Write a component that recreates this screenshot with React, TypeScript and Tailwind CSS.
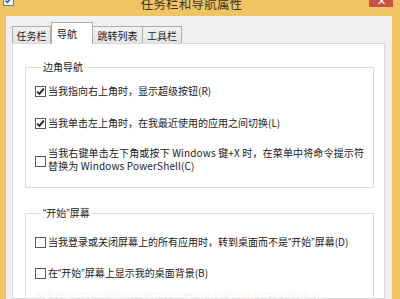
import React from "react";

const font = { fontFamily: '"Noto Sans CJK SC", "Microsoft YaHei", sans-serif' };

function Q({ c }: { c: string }) {
  return <span style={{ fontFamily: '"Liberation Sans", sans-serif' }}>{c}</span>;
}

function Box({ checked }: { checked?: boolean }) {
  return (
    <span className="w-[11px] h-[11px] shrink-0 border border-[#5a5a5a] bg-white flex items-center justify-center">
      {checked && (
        <svg width="9" height="9" viewBox="0 0 9 9">
          <path d="M1.2 4.6 L3.4 6.9 L7.8 1.6" fill="none" stroke="#1a1a1a" strokeWidth="1.7" />
        </svg>
      )}
    </span>
  );
}

function Row({ checked, children, className = "" }: { checked?: boolean; children: React.ReactNode; className?: string }) {
  return (
    <div className={`flex items-center gap-[2px] h-[14px] ${className}`}>
      <Box checked={checked} />
      <span className="whitespace-nowrap leading-[14px]">{children}</span>
    </div>
  );
}

export default function App() {
  return (
    <div
      className="w-[400px] h-[299px] bg-[#f1c463] overflow-hidden flex flex-col text-[10px] text-[#222]"
      style={font}
    >
      {/* title bar */}
      <div className="h-[16px] shrink-0 flex items-start relative">
        <div className="ml-[3px] w-[11px] h-[6px] overflow-hidden">
          <svg width="11" height="11" viewBox="0 0 11 11" className="-mt-[5px]">
            <rect x="0.5" y="0.5" width="10" height="10" fill="#eaf2fb" stroke="#5b7fa8" />
            <path d="M2.5 5.5 L4.5 7.5 L8.5 2.5" fill="none" stroke="#2a67b3" strokeWidth="1.5" />
          </svg>
        </div>
        <div className="flex-1 flex justify-center overflow-hidden h-[10px]">
          <span className="text-[12.5px] leading-[13px] -mt-[3px] text-[#3b3326] tracking-[0.2px]">任务栏和导航属性</span>
        </div>
        <div className="w-[24px] h-[7px] bg-[#c9514a] mr-[7px] flex justify-center overflow-hidden">
          <span className="text-white text-[11px] leading-[10px] -mt-[5px]">✕</span>
        </div>
      </div>

      {/* body */}
      <div className="flex-1 ml-[6px] mr-[8px] bg-[#f0f0f0] pt-[6px] pl-[6px] pr-[7px] flex flex-col min-h-0">
        {/* tabs */}
        <div className="flex items-end h-[21px] relative z-10">
          <div className="w-[39px] h-[17px] border border-b-0 border-[#adadad] bg-gradient-to-b from-[#f2f2f2] to-[#e4e4e4] flex items-center justify-center">
            任务栏
          </div>
          <div className="w-[42px] h-[22px] -mb-px border border-b-0 border-[#adadad] bg-white flex items-start pl-[5px] pt-[3px]">
            导航
          </div>
          <div className="w-[50px] h-[17px] border border-b-0 border-l-0 border-[#adadad] bg-gradient-to-b from-[#f2f2f2] to-[#e4e4e4] flex items-center justify-center">
            跳转列表
          </div>
          <div className="w-[39px] h-[17px] border border-b-0 border-l-0 border-[#adadad] bg-gradient-to-b from-[#f2f2f2] to-[#e4e4e4] flex items-center justify-center">
            工具栏
          </div>
        </div>

        {/* panel */}
        <div className="flex-1 bg-white border border-[#d9d9d9] pl-[12px] pr-[10px] pt-[16px] min-h-0">
          <fieldset className="border border-[#dcdcdc] pl-[9px] pb-[15px]">
            <legend className="ml-[6px] px-[2px] leading-[14px]">边角导航</legend>
            <Row checked className="mt-[10px]">当我指向右上角时，显示超级按钮(R)</Row>
            <Row checked className="mt-[18px]">当我单击左上角时，在我最近使用的应用之间切换(L)</Row>
            <div className="flex items-center gap-[2px] mt-[16px]">
              <span className="mt-[4px]">
                <Box />
              </span>
              <span className="whitespace-nowrap leading-[13px] tracking-[0.15px]">
                当我右键单击左下角或按下 Windows 键+X 时，在菜单中将命令提示符
                <br />
                替换为 Windows PowerShell(C)
              </span>
            </div>
          </fieldset>

          <fieldset className="border border-[#dcdcdc] pl-[9px] pb-[15px] mt-[18px]">
            <legend className="ml-[6px] px-[2px] leading-[14px]">
              <Q c="“" />开始<Q c="”" />屏幕
            </legend>
            <Row className="mt-[14px]">
              <>当我登录或关闭屏幕上的所有应用时，转到桌面而不是<Q c="“" />开始<Q c="”" />屏幕(D)</>
            </Row>
            <Row className="mt-[17px]">
              <>在<Q c="“" />开始<Q c="”" />屏幕上显示我的桌面背景(B)</>
            </Row>
            <div className="mt-[10px] h-[14px] text-[#f4f4f4] whitespace-nowrap leading-[14px]">
              在我转到<Q c="“" />开始<Q c="”" />屏幕时在我正在使用的显示器上显示<Q c="“" />开始<Q c="”" />屏幕(S)
            </div>
          </fieldset>
        </div>
      </div>
    </div>
  );
}
